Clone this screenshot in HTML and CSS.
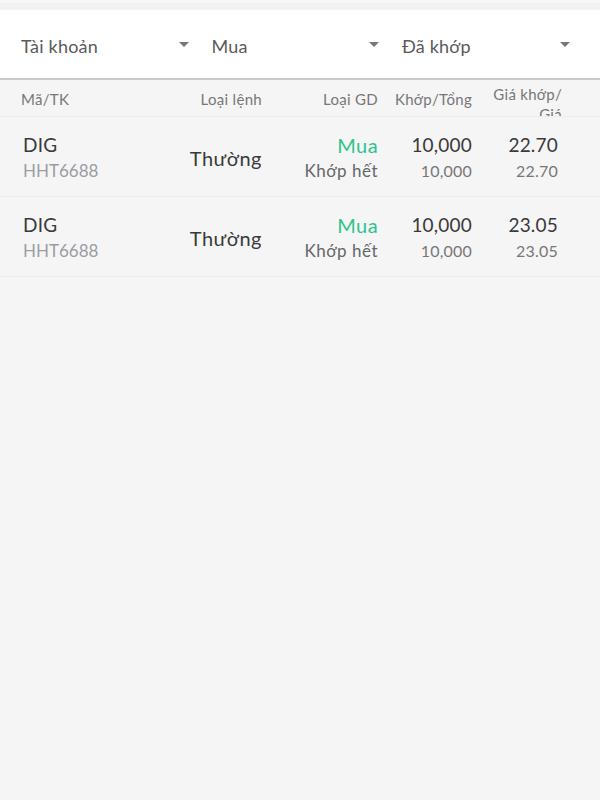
FILE: index.html
```html
<!DOCTYPE html>
<html lang="vi">
<head>
<meta charset="utf-8">
<title>Sổ lệnh</title>
<link rel="stylesheet" href="styles.css">
</head>
<body>
<div class="page">
  <div class="topstrip"></div>
  <div class="filters">
    <div class="dropdown"><span class="label">Tài khoản</span><span class="caret"></span></div>
    <div class="dropdown"><span class="label">Mua</span><span class="caret"></span></div>
    <div class="dropdown"><span class="label">Đã khớp</span><span class="caret"></span></div>
  </div>
  <div class="thead">
    <div class="th c1">Mã/TK</div>
    <div class="th c2">Loại lệnh</div>
    <div class="th c3">Loại GD</div>
    <div class="th c4">Khớp/Tổng</div>
    <div class="th c5 two">Giá khớp/<br>Giá</div>
  </div>
  <div class="row">
    <div class="cell c1"><div class="big">DIG</div><div class="sub light">HHT6688</div></div>
    <div class="cell c2 mid"><div class="big">Thường</div></div>
    <div class="cell c3"><div class="big green">Mua</div><div class="sub word">Khớp hết</div></div>
    <div class="cell c4"><div class="big">10,000</div><div class="sub num">10,000</div></div>
    <div class="cell c5"><div class="big">22.70</div><div class="sub num">22.70</div></div>
  </div>
  <div class="row">
    <div class="cell c1"><div class="big">DIG</div><div class="sub light">HHT6688</div></div>
    <div class="cell c2 mid"><div class="big">Thường</div></div>
    <div class="cell c3"><div class="big green">Mua</div><div class="sub word">Khớp hết</div></div>
    <div class="cell c4"><div class="big">10,000</div><div class="sub num">10,000</div></div>
    <div class="cell c5"><div class="big">23.05</div><div class="sub num">23.05</div></div>
  </div>
</div>
</body>
</html>
```
FILE: styles.css
```css
* { box-sizing: border-box; }
html, body { margin: 0; padding: 0; }
body {
  background: #f5f5f5;
  font-family: "Lato", "Noto Sans", sans-serif;
  color: #333;
  width: 600px;
  height: 800px;
  overflow: hidden;
}
.page {
  width: 600px;
  min-height: 800px;
  background: #f5f5f5;
}
.topstrip {
  height: 10px;
  background: #f2f2f2;
  border-top: 3px solid #f7f7f7;
}
.filters {
  height: 70px;
  background: #fff;
  border-bottom: 2px solid #c9c9c9;
  display: flex;
  padding: 0 0 0 10px;
}
.dropdown {
  width: 190.5px;
  display: flex;
  align-items: center;
  justify-content: space-between;
  padding: 3px 11px 0 11px;
}
.label {
  font-size: 18px;
  color: #5a5a5a;
  letter-spacing: 0.2px;
}
.caret {
  width: 0;
  height: 0;
  border-left: 5px solid transparent;
  border-right: 5px solid transparent;
  border-top: 5px solid #777;
  margin-right: 1px;
  margin-bottom: 3px;
}
.thead {
  height: 37px;
  overflow: hidden;
  display: grid;
  grid-template-columns: 139px 102px 116px 94px 88px;
  padding-left: 21px;
  border-bottom: 1px solid #ececec;
}
.th {
  font-size: 15px;
  color: #777;
  line-height: 20px;
  padding-top: 9px;
  letter-spacing: 0.3px;
}
.th.c1 { text-align: left; }
.th.c2, .th.c3, .th.c4 { text-align: right; }
.th.c5 { text-align: right; margin-right: -2px; }
.th.two { padding-top: 4px; }
.row {
  height: 80px;
  display: grid;
  grid-template-columns: 139px 102px 116px 94px 88px;
  padding-left: 21px;
  border-bottom: 1px solid #ebebeb;
  align-items: center;
  padding-top: 3px;
}
.cell { text-align: right; }
.cell.c1 { text-align: left; padding-left: 2px; }
.cell.c5 { padding-right: 2px; }
.big {
  font-size: 19px;
  line-height: 26px;
  color: #3a3a3a;
  letter-spacing: 0.2px;
}
.big.green { color: #2fc38c; font-size: 20px; letter-spacing: 0.4px; }
.cell.mid .big { font-size: 20px; letter-spacing: 0.5px; }
.sub {
  font-size: 16px;
  line-height: 26px;
  color: #666;
}
.sub.word { font-size: 17px; letter-spacing: 0.5px; }
.sub.light { color: #9c9ca4; font-size: 17px; }
.sub.num { color: #777; letter-spacing: 0.2px; }
.green { color: #2fc38c; }
```
